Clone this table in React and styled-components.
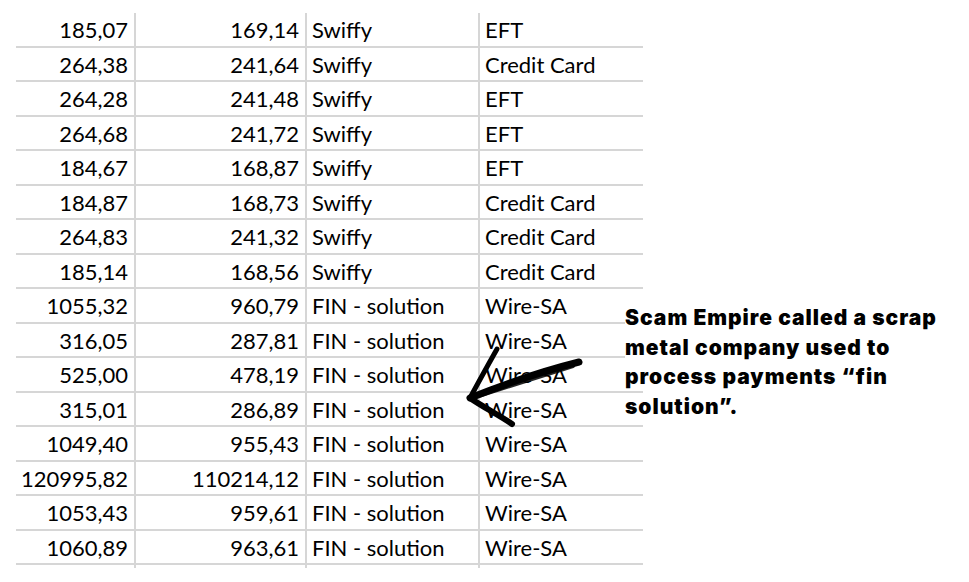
import React from "react";
import styled, { createGlobalStyle } from "styled-components";

const Global = createGlobalStyle`
  html, body { margin: 0; padding: 0; background: #ffffff; }
  body { width: 969px; height: 582px; overflow: hidden; }
`;

const Page = styled.div`
  position: relative;
  width: 969px;
  height: 582px;
  padding: 13px 0 0 16px;
  box-sizing: border-box;
  background: #fff;
`;

const Sheet = styled.div`
  display: grid;
  grid-template-columns: 120px 171px 173px 163px;
  grid-auto-rows: 34.5px;
  font-family: Lato, "Liberation Sans", sans-serif;
  font-size: 22px;
  color: #000;
`;

const Cell = styled.div`
  display: flex;
  align-items: center;
  justify-content: ${(p) => (p.$num ? "flex-end" : "flex-start")};
  padding: ${(p) => (p.$num ? "2px 6px 0 0" : "2px 0 0 5px")};
  box-sizing: border-box;
  border-bottom: 2px solid #d6d6d6;
  border-right: ${(p) => (p.$last ? "none" : "2px solid #d6d6d6")};
  white-space: nowrap;
  line-height: 1;
`;

const Stubs = styled.div`
  display: grid;
  grid-template-columns: 120px 171px 173px 163px;
`;

const Stub = styled.div`
  height: 3px;
  border-right: ${(p) => (p.$last ? "none" : "2px solid #d6d6d6")};
`;

const Note = styled.div`
  position: absolute;
  left: 625px;
  top: 303px;
  font-family: Inter, "Noto Sans", sans-serif;
  font-weight: 900;
  font-size: 21px;
  line-height: 29.5px;
  letter-spacing: 1px;
  color: #000;
`;

const NoteLine = styled.span`
  display: inline-block;
  background: #fff;
  line-height: 22px;
`;

const Arrow = styled.svg`
  position: absolute;
  left: 455px;
  top: 335px;
  overflow: visible;
`;

const rows = [
  ["185,07", "169,14", "Swiffy", "EFT"],
  ["264,38", "241,64", "Swiffy", "Credit Card"],
  ["264,28", "241,48", "Swiffy", "EFT"],
  ["264,68", "241,72", "Swiffy", "EFT"],
  ["184,67", "168,87", "Swiffy", "EFT"],
  ["184,87", "168,73", "Swiffy", "Credit Card"],
  ["264,83", "241,32", "Swiffy", "Credit Card"],
  ["185,14", "168,56", "Swiffy", "Credit Card"],
  ["1055,32", "960,79", "FIN - solution", "Wire-SA"],
  ["316,05", "287,81", "FIN - solution", "Wire-SA"],
  ["525,00", "478,19", "FIN - solution", "Wire-SA"],
  ["315,01", "286,89", "FIN - solution", "Wire-SA"],
  ["1049,40", "955,43", "FIN - solution", "Wire-SA"],
  ["120995,82", "110214,12", "FIN - solution", "Wire-SA"],
  ["1053,43", "959,61", "FIN - solution", "Wire-SA"],
  ["1060,89", "963,61", "FIN - solution", "Wire-SA"],
];

export default function App() {
  return (
    <Page>
      <Global />
      <Sheet>
        {rows.map((r, i) => (
          <React.Fragment key={i}>
            <Cell $num>{r[0]}</Cell>
            <Cell $num>{r[1]}</Cell>
            <Cell>{r[2]}</Cell>
            <Cell $last>{r[3]}</Cell>
          </React.Fragment>
        ))}
      </Sheet>
      <Stubs>
        <Stub />
        <Stub />
        <Stub />
        <Stub $last />
      </Stubs>
      <Arrow width="140" height="100" viewBox="0 0 140 100">
        <g fill="none" stroke="#000" strokeLinecap="round" strokeLinejoin="round">
          <path d="M124 27 C100 33, 60 45, 15 63" strokeWidth="7" />
          <path d="M118 31 C95 38, 55 51, 17 63" strokeWidth="4" opacity="0.85" />
          <path d="M15 63 C23 48, 33 30, 42 14" strokeWidth="5" />
          <path d="M15 63 C28 72, 44 80, 57 89" strokeWidth="6" />
        </g>
      </Arrow>
      <Note>
        <NoteLine>Scam Empire called a scrap</NoteLine>
        <br />
        <NoteLine>metal company used to</NoteLine>
        <br />
        <NoteLine>process payments “fin</NoteLine>
        <br />
        <NoteLine>solution”.</NoteLine>
      </Note>
    </Page>
  );
}
